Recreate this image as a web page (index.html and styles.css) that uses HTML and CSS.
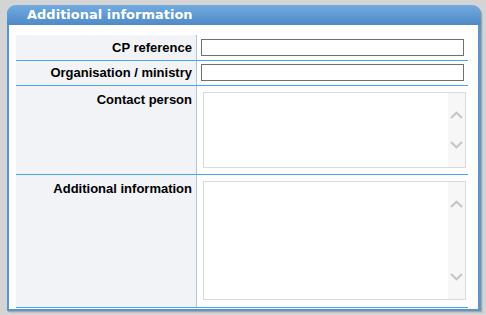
FILE: index.html
```html
<html>
<head>
<title>Additional information</title>
<link rel="stylesheet" href="styles.css">
</head>
<body>
<div class="panel">
  <div class="panel-head">Additional information</div>
  <div class="panel-body">
    <table class="form">
      <tr>
        <td class="label">CP reference</td>
        <td class="field"><input type="text" class="text"></td>
      </tr>
      <tr>
        <td class="label">Organisation / ministry</td>
        <td class="field"><input type="text" class="text"></td>
      </tr>
      <tr>
        <td class="label top">Contact person</td>
        <td class="field">
          <div class="memo small">
            <textarea></textarea>
            <div class="scroll">
              <svg width="13" height="8" viewBox="0 0 13 8"><path d="M1 7 L6.5 1.8 L12 7" fill="none" stroke="#c6c6c6" stroke-width="2.2"/></svg>
              <svg width="13" height="8" viewBox="0 0 13 8"><path d="M1 1 L6.5 6.2 L12 1" fill="none" stroke="#c6c6c6" stroke-width="2.2"/></svg>
            </div>
          </div>
        </td>
      </tr>
      <tr>
        <td class="label top">Additional information</td>
        <td class="field">
          <div class="memo big">
            <textarea></textarea>
            <div class="scroll">
              <svg width="13" height="8" viewBox="0 0 13 8"><path d="M1 7 L6.5 1.8 L12 7" fill="none" stroke="#c6c6c6" stroke-width="2.2"/></svg>
              <svg width="13" height="8" viewBox="0 0 13 8"><path d="M1 1 L6.5 6.2 L12 1" fill="none" stroke="#c6c6c6" stroke-width="2.2"/></svg>
            </div>
          </div>
        </td>
      </tr>
    </table>
  </div>
</div>
</body>
</html>
```

FILE: styles.css
```css
body { margin:0; padding:5px 0 0 7px; background:#d4d4d4; font-family:"Liberation Sans", Arial, sans-serif; }
.panel { width:469px; border:solid #5b95cf; border-width:0 3px 2px 2px; border-radius:9px 9px 0 0; background:#fff; box-shadow:1px 1px 0 #a8a8a8, 2px 2px 0 #c4c4c4; }
.panel-head { height:20px; margin:0 -3px 0 -2px; border-radius:9px 9px 0 0; background:linear-gradient(#72abdf, #4e8ac7); color:#fff; font-family:"DejaVu Sans", Verdana, sans-serif; font-weight:bold; font-size:13px; line-height:20px; padding-left:20px; }
.panel-body { padding:10px 0 1px 7px; }
.form { border-collapse:collapse; width:452px; }
.form td { padding:0; border-bottom:1px solid #49a5ed; }
.form .label { width:176px; background:#f1f3f7; border-right:1px solid #b4c3dc; text-align:right; font-weight:bold; font-size:13px; color:#000; padding-right:4px; height:25px; }
.form .top { vertical-align:top; padding-top:6px; height:auto; }
.field { padding-left:4px !important; }
.text { display:block; width:263px; height:17px; margin:0; border:1px solid #707070; padding:0; }
.memo { display:flex; width:261px; border:1px solid #dadada; background:#fff; margin:6px 0 6px 2px; }
.memo textarea { flex:1; border:none; resize:none; margin:0; padding:0; outline:none; }
.memo.small { height:74px; }
.memo.big { height:117px; margin-bottom:7px; }
.scroll { width:17px; background:#f7f7f7; display:flex; flex-direction:column; justify-content:space-between; align-items:center; padding:18px 0; }
```
